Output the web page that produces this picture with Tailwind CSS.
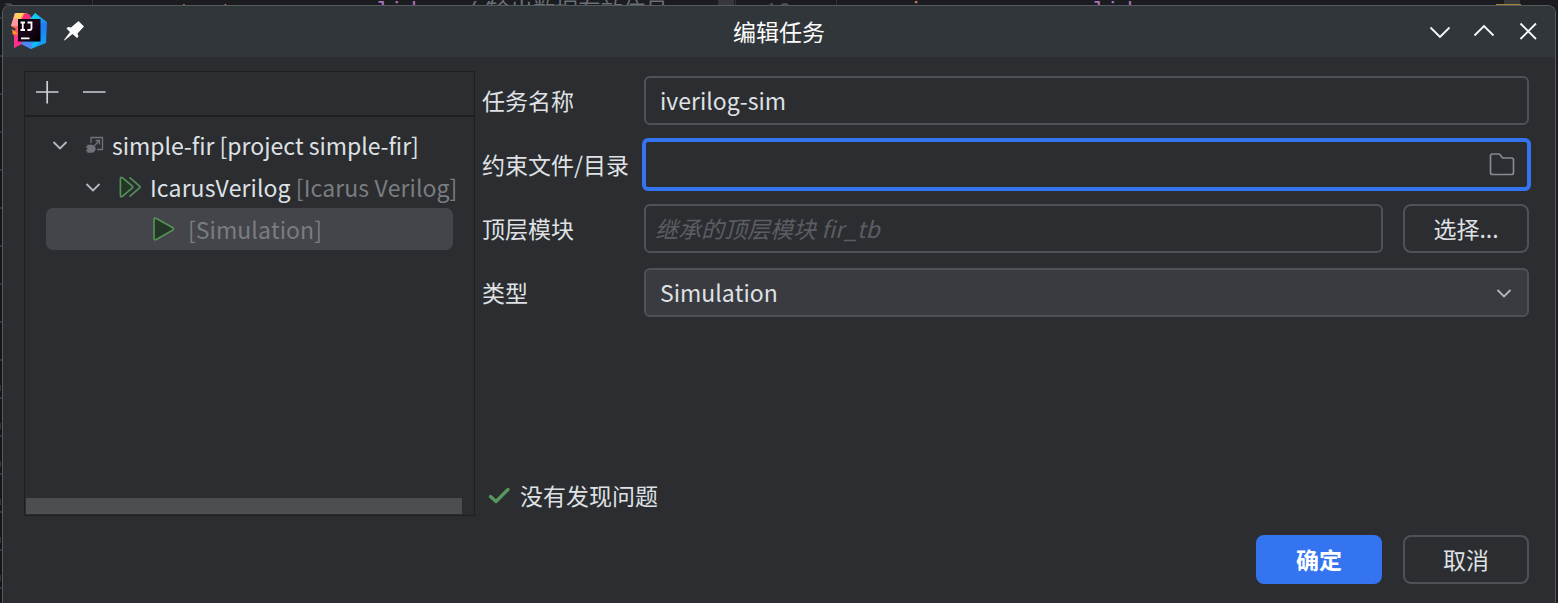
<!DOCTYPE html>
<html lang="zh-CN">
<head>
<meta charset="utf-8">
<title>编辑任务</title>
<script src="https://cdn.jsdelivr.net/npm/@tailwindcss/browser@4"></script>
</head>
<body class="relative h-[603px] w-[1558px] overflow-hidden bg-[#1b1c1f] font-['Noto_Sans_CJK_SC',sans-serif] text-[23px] leading-[34px] text-[#dfe1e5] [font-kerning:none]">
<!-- editor code behind the dialog -->
<div class="absolute left-0 top-0 h-[5px] w-full overflow-hidden whitespace-pre text-[23px] leading-[26px] font-['Liberation_Mono',monospace]">
  <span class="absolute left-[3px] top-[3px] h-[10px] w-[11px] rounded-full bg-[#3c434a]"></span>
  <span class="absolute left-[92px] top-0 h-[5px] w-px bg-[#313338]"></span>
  <span class="absolute left-[151px] top-[1px] text-[#c77d55]">output</span>
  <span class="absolute left-[348px] top-0 text-[#a771bf]">valid</span>
  <span class="absolute left-[464px] top-0 text-[#6b6f76]">//</span>
  <span class="absolute left-[488px] -top-[4px] font-['Noto_Sans_CJK_SC',sans-serif] text-[22.5px] text-[#6b6f76]">输出数据有效信号</span>
  <span class="absolute left-[718px] top-0 h-[5px] w-[16px] bg-[#37383b]"></span>
  <span class="absolute left-[735px] top-0 h-[5px] w-px bg-[#313338]"></span>
  <span class="absolute left-[764px] top-0 text-[#4b5059]">10</span>
  <span class="absolute left-[836px] top-0 h-[5px] w-px bg-[#313338]"></span>
  <span class="absolute left-[895px] top-0 text-[#c77d55]">wire</span>
  <span class="absolute left-[1064px] top-0 text-[#a771bf]">valid</span>
  <span class="absolute left-[1496px] top-[4px] h-px w-[25px] bg-[#a38434]"></span>
  <span class="absolute left-[1504px] top-0 h-[4px] w-[16px] bg-[#37383b]"></span>
</div>
<!-- gutter separators left of the dialog -->
<div class="absolute left-0 top-[17px] h-[586px] w-[2px] bg-[repeating-linear-gradient(to_bottom,#34363b_0px,#34363b_2px,#151618_2px,#151618_38px)]"></div>
<div class="absolute left-0 top-[385px] h-[218px] w-px bg-[repeating-linear-gradient(to_bottom,#3d3530_0px,#3d3530_6px,transparent_6px,transparent_38px)]"></div>
<div class="ml-[2px] mt-[5px] flex h-[598px] w-[1554px] flex-col rounded-t-[8px] border border-b-0 border-[#555a5e] bg-[#2b2d30] overflow-hidden">
  <header class="flex h-[51px] shrink-0 items-center bg-[#31363a]">
    <svg class="ml-[8px] -mt-[3px]" width="37" height="37" viewBox="0 0 37 37">
      <defs>
        <linearGradient id="a" x1="0" y1="0" x2="0.4" y2="1"><stop offset="0" stop-color="#ffd84a"/><stop offset=".45" stop-color="#ff5f5a"/><stop offset="1" stop-color="#f0218a"/></linearGradient>
        <linearGradient id="b" x1="0" y1="0" x2="0.2" y2="1"><stop offset="0" stop-color="#16e0f0"/><stop offset=".5" stop-color="#1f7cf5"/><stop offset="1" stop-color="#12a0f8"/></linearGradient>
        <linearGradient id="c" x1="0" y1="0" x2="1" y2="1"><stop offset="0" stop-color="#000"/><stop offset=".5" stop-color="#1c0518"/><stop offset="1" stop-color="#000"/></linearGradient>
      </defs>
      <path d="M4 1 15 1 20 5 20 31 13 31 3 36 4 25 1 21 5 17 0 14Z" fill="url(#a)"/>
      <path d="M13 1.500 18 2 21 7 20 12 10 10Z" fill="#f92d7a"/>
      <path d="M1 17 7 22 2 22Z" fill="#ff9a1f"/>
      <path d="M4 1 12 1 7 14 0 14Z" fill="#ff9aa0"/>
      <path d="M5 1 13 1 9 7 3 6Z" fill="#ffd25a"/>
      <path d="M3 24 9 24 12 31 3 36Z" fill="#fb2f8c"/>
      <path d="M24 1 32 7 36 10 35 31 20 37 10 31 20 25Z" fill="url(#b)"/>
      <path d="M24 1 29 6 22 10 19 7Z" fill="#11c9f0"/>
      <path d="M13 30 22 31 20 37 10 32Z" fill="#4f86f2"/>
      <path d="M22 31 30 29 20 37Z" fill="#13c3f5"/>
      <rect x="7" y="7" width="22.500" height="22.500" fill="url(#c)"/>
      <path d="M9.500 10.500h4.500M11.750 10.500v7.500M9.500 18h4.500M16.500 10.500h4v5.500q0 2-2 2h-2" fill="none" stroke="#fff" stroke-width="1.800"/>
      <path d="M10 26.300h8.500" stroke="#fff" stroke-width="1.800"/>
    </svg>
    <svg class="ml-[15px] -mt-[1px]" width="22" height="22" viewBox="0 0 22 22"><path d="M15.500 1 21 6.500 14.500 13.500 15.500 16.500 14 18 9.500 14 1.500 20.500 1 20 7 12 3.500 8.500 5 7 8 7.500Z" fill="#fcfcfc"/></svg>
    <div class="ml-[648px] -mt-[1px] w-[92px] whitespace-nowrap text-[#fcfcfc]">编辑任务</div>
    <svg class="ml-auto mr-[16px]" width="110" height="22" viewBox="0 0 110 22" fill="none" stroke="#fcfcfc" stroke-width="1.800"><path d="M1.500 6.500 11 16 20.500 6.500M45.500 14.500 55 5 64.500 14.500M91.500 2.500 107 18M107 2.500 91.500 18"/></svg>
  </header>
  <main class="flex h-[460px] shrink-0">
    <section class="ml-[21px] mt-[14px] flex h-[445px] w-[451px] shrink-0 flex-col border border-[#1e1f22]">
      <div class="h-[45px] shrink-0 border-b-2 border-[#1e1f22]">
        <svg width="90" height="43" viewBox="0 0 90 43" stroke="#ced0d6" stroke-width="1.700"><path d="M11 20h22.500M22.200 9v22.500M58 20h22.500"/></svg>
      </div>
      <div class="flex flex-1 flex-col pl-[21px] pt-[8px]">
        <div class="flex h-[41px] items-center whitespace-nowrap">
          <svg class="ml-[6px]" width="16" height="12" viewBox="0 0 16 12" fill="none" stroke="#b4b8bf" stroke-width="1.800"><path d="M1.500 2 8 8.500 14.500 2"/></svg>
          <svg class="ml-[17px] -mt-[1px]" width="20" height="20" viewBox="0 0 20 20" fill="none" stroke="#6f737a" stroke-width="1.300"><path d="M6 8V2.500H17.500V14.500H12"/><path d="M9.500 10.500 14.500 5.500M10.500 5.500h4v4"/><path d="M3 10.500h4q3 .5 3 3.200t-3 3.300H3zM1 12h2M1 15.500h2" fill="#6f737a"/></svg>
          <span class="ml-[7px] -mt-[2px] tracking-[-0.03px]">simple-fir [project simple-fir]</span>
        </div>
        <div class="flex h-[42px] items-center whitespace-nowrap">
          <svg class="ml-[39px] mt-px" width="16" height="12" viewBox="0 0 16 12" fill="none" stroke="#b4b8bf" stroke-width="1.800"><path d="M1.500 2 8 8.500 14.500 2"/></svg>
          <svg class="ml-[17px]" width="23" height="24" viewBox="0 0 24 24" fill="none" stroke="#549159" stroke-width="1.700" stroke-linejoin="round"><path d="M2.500 3.500Q2.500 1 4.500 2.300L15 11Q16 12 15 13L4.500 21.700Q2.500 23 2.500 20.500Z" fill="#253627"/><path d="M12 2 22.500 11Q23.400 12 22.500 13L12 22"/></svg>
          <span class="ml-[9px] tracking-[0.07px]">IcarusVerilog <span class="text-[#7a7d80]">[Icarus Verilog]</span></span>
        </div>
        <div class="flex h-[42px] w-[407px] items-center whitespace-nowrap rounded-[7px] bg-[#43454a] text-[#7a7d80]">
          <svg class="ml-[106px]" width="24" height="24" viewBox="0 0 24 24" fill="none" stroke="#549159" stroke-width="1.700" stroke-linejoin="round"><path d="M2 3Q2 .3 4.300 1.500L20.500 10.500Q22.500 12 20.500 13.200L4.300 22.500Q2 23.500 2 21Z" fill="#253627"/></svg>
          <span class="ml-[12px] tracking-[0.06px]">[Simulation]</span>
        </div>
      </div>
      <div class="mb-px ml-px h-[16px] w-[436px] bg-[#4d4e51]"></div>
    </section>
    <section class="ml-[7px] flex w-[1047px] shrink-0 flex-col pt-[19px]">
      <div class="flex h-[49px] items-center"><label class="w-[162px] shrink-0 pb-[2px]">任务名称</label><div class="flex h-[49px] w-[885px] items-center rounded-[6px] border-2 border-[#4e5157] pb-[2px] pl-[14px]">iverilog-sim</div></div>
      <div class="mt-[13px] flex h-[53px] items-center"><label class="w-[160px] shrink-0 whitespace-nowrap pb-[2px]">约束文件/目录</label><div class="flex h-[53px] w-[889px] shrink-0 items-center justify-end rounded-[6px] border-4 border-[#3574f0] pb-[2px] pr-[12px]">
        <svg width="26" height="24" viewBox="0 0 26 24" fill="none" stroke="#868a91" stroke-width="1.700"><path d="M1.500 4q0-2 2-2h6q1 0 1.700.8L13.500 6H22.500q2 0 2 2v12.500q0 2-2 2H3.500q-2 0-2-2z"/></svg></div></div>
      <div class="mt-[13px] flex h-[49px] items-center"><label class="w-[162px] shrink-0 pb-[2px]">顶层模块</label><div class="flex h-[49px] w-[739px] items-center rounded-[6px] border-2 border-[#4e5157] pb-[2px] pl-[9px] italic text-[#5a5d63]">继承的顶层模块 fir_tb</div><button class="ml-[20px] h-[49px] w-[126px] rounded-[8px] border-2 border-[#4e5157] pb-[2px]">选择...</button></div>
      <div class="mt-[15px] flex h-[49px] items-center"><label class="w-[162px] shrink-0 pb-[2px]">类型</label><div class="flex h-[49px] w-[885px] items-center rounded-[6px] border-2 border-[#4e5157] bg-[#393b40] pl-[14px]"><span class="pb-[2px]">Simulation</span>
        <svg class="ml-auto mr-[15px] mt-[2px]" width="16" height="12" viewBox="0 0 16 12" fill="none" stroke="#b4b8bf" stroke-width="1.800"><path d="M1.500 2 8 8.500 14.500 2"/></svg></div></div>
      <div class="mt-auto mb-[5px] flex items-center"><svg class="ml-[6px] mt-[2px]" width="23" height="18" viewBox="0 0 23 18" fill="none" stroke="#57965c" stroke-width="3.300" stroke-linecap="round" stroke-linejoin="round"><path d="M2.500 9.500 8 14.500 20 2.500"/></svg><span class="ml-[9px]">没有发现问题</span></div>
    </section>
  </main>
  <footer class="flex justify-end gap-[21px] pr-[26px] pt-[18px]">
    <button class="h-[49px] w-[126px] rounded-[8px] bg-[#3574f0] pb-[2px] font-bold text-white">确定</button>
    <button class="h-[49px] w-[126px] rounded-[8px] border-2 border-[#4e5157] pb-[2px]">取消</button>
  </footer>
</div>
</body>
</html>
